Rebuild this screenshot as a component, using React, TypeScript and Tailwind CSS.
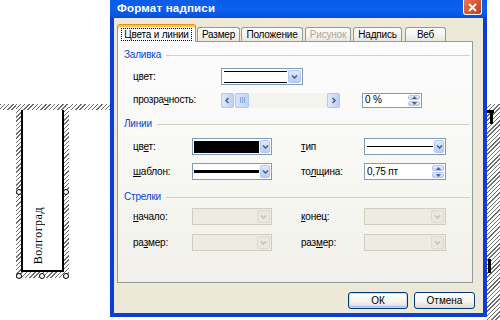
import React from "react";

const hatch =
  "bg-[repeating-linear-gradient(135deg,#707070_0px,#707070_1px,#ffffff_1px,#ffffff_3px)]";

function Chevron({ dir = "down", color = "#4d6185" }: { dir?: "down" | "left" | "right" | "up"; color?: string }) {
  const d =
    dir === "down"
      ? "M1 1.5 L3.5 4 L6 1.5"
      : dir === "up"
      ? "M1 4 L3.5 1.5 L6 4"
      : dir === "left"
      ? "M4.5 1 L2 3.5 L4.5 6"
      : "M2.5 1 L5 3.5 L2.5 6";
  const w = 7;
  const h = dir === "down" || dir === "up" ? 5.5 : 7;
  return (
    <svg width={w} height={h} viewBox={`0 0 ${w} ${h}`}>
      <path d={d} fill="none" stroke={color} strokeWidth="1.6" />
    </svg>
  );
}

function DropBtn({ disabled }: { disabled?: boolean }) {
  return disabled ? (
    <div className="w-[13px] my-[1px] mr-[1px] rounded-[2px] bg-[#e9e8e0] border border-[#dedcd2] flex items-center justify-center">
      <Chevron color="#c5c3b8" />
    </div>
  ) : (
    <div className="w-[13px] my-[1px] mr-[1px] rounded-[2px] bg-[linear-gradient(180deg,#dfe8ff_0%,#b8ccfa_100%)] border border-[#b4c6f2] flex items-center justify-center">
      <Chevron />
    </div>
  );
}

function Combo({
  className,
  disabled,
  children,
}: {
  className: string;
  disabled?: boolean;
  children?: React.ReactNode;
}) {
  return (
    <div
      className={`${className} h-[17px] flex border ${
        disabled ? "border-[#cfcdc0] bg-[#ecebe4]" : "border-[#7f9db9] bg-white"
      }`}
    >
      <div className="flex-1 flex items-center px-[1px] py-[1px]">{children}</div>
      <DropBtn disabled={disabled} />
    </div>
  );
}

function Spin({ className, value, h }: { className: string; value: string; h: string }) {
  return (
    <div className={`${className} ${h} flex border border-[#7f9db9] bg-white`}>
      <div className="flex-1 flex items-center pl-[2px] text-[10px] leading-none">{value}</div>
      <div className="w-[12px] my-[1px] mr-[1px] flex flex-col gap-[1px]">
        <div className="flex-1 rounded-[2px] bg-[linear-gradient(180deg,#e3ebff_0%,#bfd0f9_100%)] border border-[#b4c6f2] flex items-center justify-center">
          <svg width="5" height="3" viewBox="0 0 5 3">
            <path d="M0 3 L2.5 0 L5 3 Z" fill="#4d6185" />
          </svg>
        </div>
        <div className="flex-1 rounded-[2px] bg-[linear-gradient(180deg,#e3ebff_0%,#bfd0f9_100%)] border border-[#b4c6f2] flex items-center justify-center">
          <svg width="5" height="3" viewBox="0 0 5 3">
            <path d="M0 0 L2.5 3 L5 0 Z" fill="#4d6185" />
          </svg>
        </div>
      </div>
    </div>
  );
}

function Header({ label, className }: { label: string; className: string }) {
  return (
    <div className={`${className} h-[14px] flex items-center pl-[6px] pr-[2px]`}>
      <span className="text-[10px] text-[#0046d5] leading-none">{label}</span>
      <div className="flex-1 h-px bg-[#d4d0c0] ml-[5px]" />
    </div>
  );
}

function Tab({ label, className, disabled }: { label: string; className: string; disabled?: boolean }) {
  return (
    <div
      className={`${className} h-[14px] rounded-t-[3px] border border-b-0 border-[#919b9c] bg-[linear-gradient(180deg,#ffffff_0%,#f3f3ef_60%,#e6e5de_100%)] flex items-center justify-center text-[10px] leading-none tracking-[-0.2px] ${
        disabled ? "text-[#aca899]" : "text-black"
      }`}
    >
      {label}
    </div>
  );
}

export default function App() {
  return (
    <div className="relative w-[500px] h-[320px] overflow-hidden bg-white font-['Liberation_Sans',Arial,sans-serif]">
      {/* canvas: horizontal text box selection frame */}
      <div className={`absolute left-0 top-[104px] w-[500px] h-[6px] ${hatch}`} />
      {/* right hatched edge */}
      <div className={`absolute left-[486px] top-[104px] w-[14px] h-[216px] ${hatch}`} />
      <div className="absolute left-[486px] top-[110px] w-[8px] h-[3px] bg-black" />
      <div className="absolute left-[490px] top-[110px] w-[3px] h-[14px] bg-black" />
      <div className="absolute left-[488px] top-[259px] w-[3px] h-[14px] bg-black" />

      {/* vertical text box */}
      <div className={`absolute left-[16px] top-[104px] w-[53px] h-[174px] ${hatch} px-[5px] pb-[6px] pt-[6px] flex`}>
        <div className="flex-1 bg-white border-x-2 border-b-2 border-black flex items-end pl-[9px] pb-[6px]">
          <span className="[writing-mode:vertical-rl] rotate-180 font-['Liberation_Serif',serif] text-[12px] leading-[12px] tracking-[0.5px] text-black">
            Волгоград
          </span>
        </div>
      </div>
      {/* handles */}
      <div className="absolute left-[16px] top-[189px] w-[6px] h-[6px] rounded-full border border-black bg-white" />
      <div className="absolute left-[63px] top-[189px] w-[6px] h-[6px] rounded-full border border-black bg-white" />
      <div className="absolute left-[16px] top-[273px] w-[6px] h-[6px] rounded-full border border-black bg-white" />
      <div className="absolute left-[39px] top-[273px] w-[6px] h-[6px] rounded-full border border-black bg-white" />
      <div className="absolute left-[63px] top-[273px] w-[6px] h-[6px] rounded-full border border-black bg-white" />

      {/* dialog window */}
      <div className="absolute left-[110px] top-0 w-[377px] h-[317px] bg-[#0b3fd2] flex flex-col">
        <div className="h-[18px] flex items-start justify-between pl-[7px] pr-[5px] bg-[linear-gradient(180deg,#0a5ce8_0%,#0b61ec_50%,#0656e0_85%,#0a48d0_100%)]">
          <span className="mt-[1px] text-[11.5px] leading-[14px] font-bold text-white tracking-[0.2px]">
            Формат надписи
          </span>
          <div className="w-[19px] h-[15px] rounded-b-[3px] border border-t-0 border-white bg-[linear-gradient(135deg,#e87a56_0%,#d8502c_60%,#c23f1c_100%)] flex items-center justify-center">
            <svg width="9" height="9" viewBox="0 0 9 9">
              <path d="M1 1 L8 8 M8 1 L1 8" stroke="#ffffff" strokeWidth="1.8" />
            </svg>
          </div>
        </div>
        <div className="flex-1 mx-[4px] mb-[4px] bg-[#ece9d8] flex flex-col pt-[6px] pl-[3px] pr-[10px]">
          {/* tabs */}
          <div className="relative z-10 flex items-end h-[17px]">
            <div className="w-[79px] h-[18px] -mb-px rounded-t-[3px] border border-b-0 border-[#919b9c] border-t-[#e68b2c] shadow-[inset_0_2px_0_#ffc73c] bg-[#fcfcfe] flex items-center justify-center pt-[2px]">
              <span className="border border-dotted border-black px-[2px] text-[10px] leading-[11px] tracking-[-0.2px]">
                Цвета и линии
              </span>
            </div>
            <Tab label="Размер" className="ml-[1px] w-[43px]" />
            <Tab label="Положение" className="ml-[1px] w-[62px]" />
            <Tab label="Рисунок" className="ml-[2px] w-[46px]" disabled />
            <Tab label="Надпись" className="ml-[2px] w-[49px]" />
            <Tab label="Веб" className="ml-[3px] w-[41px]" />
          </div>

          {/* panel */}
          <div className="h-[242px] border border-[#919b9c] bg-[linear-gradient(180deg,#fcfcfe_0%,#f8f8f4_50%,#f1f0ea_100%)] flex flex-col text-[10px] leading-none tracking-[-0.2px] text-black">
            <Header label="Заливка" className="mt-[6px]" />
            <div className="mt-[6px] h-[17px] flex items-center">
              <div className="w-[103px] pl-[15px]">цвет:</div>
              <Combo className="w-[82px]">
                <div className="w-[63px] h-[12px] ml-[1px] border-y border-black bg-white" />
              </Combo>
            </div>
            <div className="mt-[7px] h-[16px] flex items-center">
              <div className="w-[103px] pl-[15px]">
                прозра<u>ч</u>ность:
              </div>
              <div className="w-[119px] h-[15px] flex bg-[#f4f3ee]">
                <div className="w-[13px] rounded-[2px] bg-[linear-gradient(90deg,#dfe8ff_0%,#bccffa_100%)] border border-[#b4c6f2] flex items-center justify-center">
                  <Chevron dir="left" />
                </div>
                <div className="ml-[1px] w-[14px] rounded-[2px] bg-[linear-gradient(90deg,#d8e3fe_0%,#c2d3fb_100%)] border border-[#b4c6f2] flex items-center justify-center gap-[1px]">
                  <div className="w-px h-[6px] bg-[#8da4da]" />
                  <div className="w-px h-[6px] bg-[#8da4da]" />
                  <div className="w-px h-[6px] bg-[#8da4da]" />
                </div>
                <div className="flex-1" />
                <div className="w-[13px] rounded-[2px] bg-[linear-gradient(90deg,#dfe8ff_0%,#bccffa_100%)] border border-[#b4c6f2] flex items-center justify-center">
                  <Chevron dir="right" />
                </div>
              </div>
              <Spin className="ml-[22px] w-[60px]" h="h-[15px]" value="0 %" />
            </div>

            <Header label="Линии" className="mt-[9px]" />
            <div className="mt-[7px] h-[17px] flex items-center">
              <div className="w-[74px] pl-[15px]">
                цв<u>е</u>т:
              </div>
              <Combo className="w-[80px]">
                <div className="w-[65px] h-[12px] bg-black" />
              </Combo>
              <div className="w-[29px]" />
              <div className="w-[63px]">
                <u>т</u>ип
              </div>
              <Combo className="w-[82px]">
                <div className="w-[66px] h-px ml-[1px] bg-black" />
              </Combo>
            </div>
            <div className="mt-[8px] h-[17px] flex items-center">
              <div className="w-[74px] pl-[15px]">
                <u>ш</u>аблон:
              </div>
              <Combo className="w-[80px]">
                <div className="w-[65px] h-[3px] bg-black" />
              </Combo>
              <div className="w-[29px]" />
              <div className="w-[63px]">
                то<u>л</u>щина:
              </div>
              <Spin className="w-[82px]" h="h-[17px]" value="0,75 пт" />
            </div>

            <Header label="Стрелки" className="mt-[10px]" />
            <div className="mt-[4px] h-[17px] flex items-center">
              <div className="w-[74px] pl-[15px]">
                <u>н</u>ачало:
              </div>
              <Combo className="w-[80px]" disabled />
              <div className="w-[29px]" />
              <div className="w-[63px]">
                <u>к</u>онец:
              </div>
              <Combo className="w-[82px]" disabled />
            </div>
            <div className="mt-[9px] h-[17px] flex items-center">
              <div className="w-[74px] pl-[15px]">
                ра<u>з</u>мер:
              </div>
              <Combo className="w-[80px]" disabled />
              <div className="w-[29px]" />
              <div className="w-[63px]">
                раз<u>м</u>ер:
              </div>
              <Combo className="w-[82px]" disabled />
            </div>
          </div>

          {/* buttons */}
          <div className="mt-[9px] -mr-[2px] flex justify-end gap-[6px]">
            <button className="w-[60px] h-[17px] rounded-[3px] border border-[#003c74] bg-[linear-gradient(180deg,#ffffff_0%,#f3f3ee_60%,#dcd8cc_100%)] shadow-[inset_0_0_0_1px_#c5d5fb,inset_0_-1px_0_1px_#a9bff1] text-[10px] leading-none text-black">
              ОК
            </button>
            <button className="w-[61px] h-[17px] rounded-[3px] border border-[#003c74] bg-[linear-gradient(180deg,#ffffff_0%,#f3f3ee_60%,#dcd8cc_100%)] text-[10px] leading-none text-black">
              Отмена
            </button>
          </div>
        </div>
      </div>
    </div>
  );
}
